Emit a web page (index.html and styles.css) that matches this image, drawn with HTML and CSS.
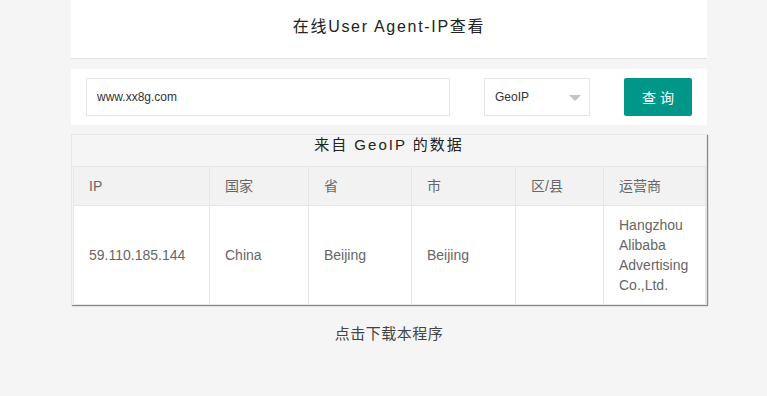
FILE: index.html
```html
<!DOCTYPE html>
<html lang="zh-CN">
<head>
    <meta charset="UTF-8">
    <meta name="viewport" content="width=device-width, initial-scale=1.0">
    <title>在线User Agent-IP查看</title>
    <link rel="stylesheet" href="styles.css">
</head>
<body>

    <div class="container">
        <div class="header">在线User Agent-IP查看</div>

        <form class="query">
            <input class="host" type="text" value="www.xx8g.com">
            <div class="select">
                <span>GeoIP</span>
                <i class="caret"></i>
            </div>
            <button class="btn" type="button">查 询</button>
        </form>

        <div class="result">
            <div class="caption">来自 GeoIP 的数据</div>
            <table class="data">
                <colgroup>
                    <col style="width:136px">
                    <col style="width:99px">
                    <col style="width:103px">
                    <col style="width:104px">
                    <col style="width:88px">
                    <col style="width:102px">
                </colgroup>
                <thead>
                    <tr>
                        <th>IP</th>
                        <th>国家</th>
                        <th>省</th>
                        <th>市</th>
                        <th>区/县</th>
                        <th>运营商</th>
                    </tr>
                </thead>
                <tbody>
                    <tr>
                        <td>59.110.185.144</td>
                        <td>China</td>
                        <td>Beijing</td>
                        <td>Beijing</td>
                        <td></td>
                        <td>Hangzhou Alibaba Advertising Co.,Ltd.</td>
                    </tr>
                </tbody>
            </table>
        </div>

        <div class="footer"><a href="#">点击下载本程序</a></div>
    </div>

</body>
</html>
```

FILE: styles.css
```css
body, html {
    margin: 0;
    padding: 0;
    font-family: "Liberation Sans", "Noto Sans CJK SC", sans-serif;
    background-color: #f5f5f5;
    color: #333;
}

.container {
    width: 636px;
    margin-left: 71px;
}

.header {
    background-color: #fff;
    height: 58px;
    line-height: 54px;
    border-bottom: 1px solid #e2e2e2;
    text-align: center;
    font-size: 16px;
    letter-spacing: 1.7px;
    color: #222;
}

.query {
    display: flex;
    align-items: center;
    margin: 10px 0 9px;
    height: 56px;
    padding: 0 15px;
    background-color: #fff;
}

.host {
    box-sizing: border-box;
    width: 364px;
    height: 38px;
    padding: 0 10px;
    border: 1px solid #e6e6e6;
    font-family: inherit;
    font-size: 12px;
    color: #333;
    outline: none;
}

.select {
    box-sizing: border-box;
    display: flex;
    align-items: center;
    justify-content: space-between;
    width: 106px;
    height: 38px;
    margin-left: 34px;
    padding: 0 8px 0 10px;
    border: 1px solid #e6e6e6;
    font-size: 12px;
    color: #333;
}

.caret {
    width: 0;
    height: 0;
    border-left: 6px solid transparent;
    border-right: 6px solid transparent;
    border-top: 6px solid #c2c2c2;
    margin-top: 2px;
}

.btn {
    width: 68px;
    height: 38px;
    margin-left: 34px;
    border: none;
    border-radius: 2px;
    background-color: #009688;
    color: #fff;
    font-family: inherit;
    font-size: 14px;
    letter-spacing: 0;
    cursor: pointer;
}

.result {
    box-sizing: border-box;
    padding: 0 1px;
    border: 1px solid #e6e6e6;
    border-bottom: none;
    background-color: #f5f5f5;
    box-shadow: 1px 1px 1px #888;
}

.caption {
    height: 31px;
    line-height: 20px;
    text-align: center;
    font-size: 15px;
    letter-spacing: 2px;
    color: #222;
}

.data {
    width: 632px;
    border-collapse: collapse;
    table-layout: fixed;
    background-color: #fff;
    font-size: 14px;
    color: #666;
}

.data th,
.data td {
    border: 1px solid #e6e6e6;
    padding: 9px 15px;
    text-align: left;
    font-weight: normal;
    line-height: 20px;
}

.data th {
    background-color: #f2f2f2;
    height: 20px;
}

.data td {
    height: 80px;
}

.footer {
    margin-top: 17px;
    text-align: center;
    font-size: 15px;
    letter-spacing: 0.5px;
}

.footer a {
    color: #444;
    text-decoration: none;
}
```
